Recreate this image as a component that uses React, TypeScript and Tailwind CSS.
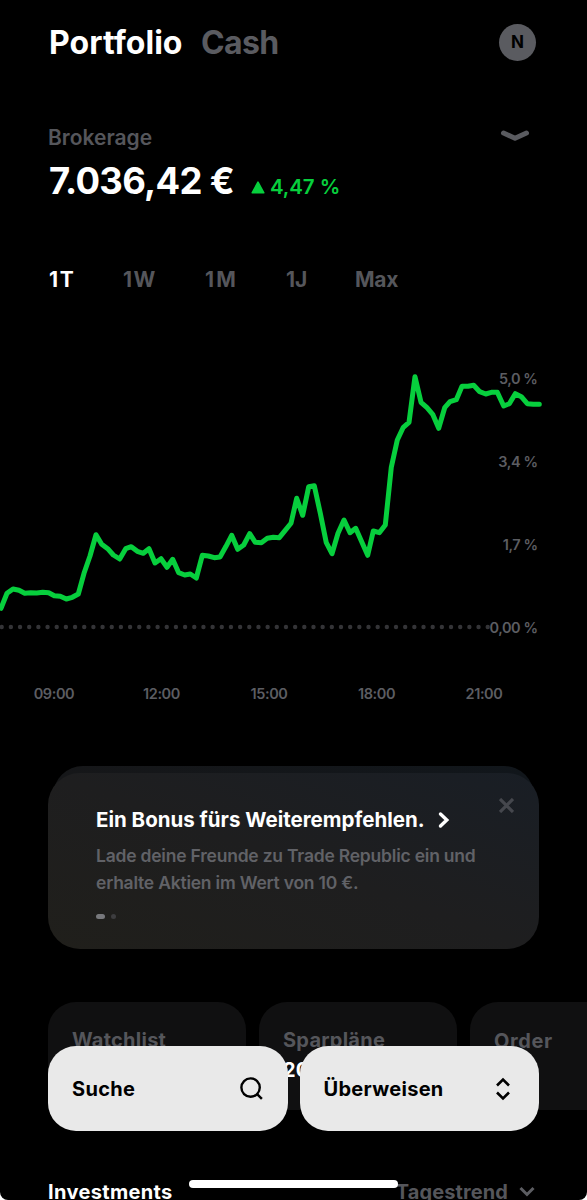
import React from "react";

const LINE: [number, number][] = [
  [3, 745], [21, 700], [39, 687], [57, 691], [74, 700], [92, 698], [110, 699], [128, 697], [146, 698], [163, 707],
  [181, 709], [199, 717], [217, 712], [235, 702], [252, 640], [270, 588], [288, 524], [305, 553], [323, 566],
  [340, 585], [359, 597], [377, 566], [394, 560], [412, 574], [430, 580], [447, 566], [465, 609], [483, 596],
  [501, 622], [518, 598], [536, 638], [554, 645], [571, 642], [589, 654], [607, 586], [625, 588], [643, 593],
  [660, 591], [678, 559], [695, 526], [713, 568], [731, 555], [749, 521], [766, 547], [784, 548], [802, 535],
  [820, 532], [838, 533], [855, 512], [873, 490], [890, 415], [908, 466], [926, 380], [943, 377], [961, 460],
  [979, 548], [996, 581], [1014, 520], [1032, 480], [1050, 518], [1067, 505], [1085, 545], [1103, 586],
  [1120, 513], [1138, 518], [1156, 495], [1174, 322], [1192, 240], [1210, 202], [1227, 187], [1245, 50],
  [1263, 127], [1281, 143], [1298, 163], [1316, 205], [1334, 143], [1350, 125], [1369, 119], [1386, 79],
  [1404, 79], [1421, 76], [1439, 95], [1457, 102], [1474, 97], [1492, 97], [1511, 138], [1528, 131], [1546, 101],
  [1564, 110], [1582, 131], [1600, 133], [1618, 133],
];

const points = LINE.map(([x, y]) => `${(x / 3).toFixed(1)},${(y / 3).toFixed(1)}`).join(" ");

function Header() {
  return (
    <header className="flex h-[84px] items-center justify-between pr-[51px] pl-[49px]">
      <div className="flex gap-[19px] pt-[2px] text-[32px] font-bold leading-[40px]">
        <h1 className="w-[133px] tracking-[0.05px]">Portfolio</h1>
        <span className="tracking-[-0.6px] text-[#5a5b60]">Cash</span>
      </div>
      <div className="flex size-[37px] items-center justify-center rounded-full bg-[#5a5b60] pt-[2px] text-[17px] font-bold text-black">
        N
      </div>
    </header>
  );
}

function Balance() {
  return (
    <section className="flex h-[166px] justify-between pt-[37px] pr-[57px] pl-[48px]">
      <div>
        <p className="h-[32px] text-[21px] font-semibold leading-[34px] tracking-[0px] text-[#55565b]">Brokerage</p>
        <div className="flex items-baseline">
          <span className="w-[203px] pl-[1px] text-[36.5px] font-bold leading-[56px] tracking-[-0.7px]">7.036,42 €</span>
          <svg className="mr-[5px] h-[13px] w-[14px]" viewBox="0 0 14 13">
            <path d="M7 1.2 12.8 11.8H1.2Z" fill="#07cf3d" stroke="#07cf3d" strokeWidth="1.6" strokeLinejoin="round" />
          </svg>
          <span className="text-[20.5px] font-semibold tracking-[-0.1px] text-[#07cf3d]">4,47 %</span>
        </div>
      </div>
      <svg className="mt-[8px] h-[13px] w-[30px]" viewBox="0 0 30 13" fill="none">
        <path d="M3.5 4 15 9.2 26.500 4" stroke="#5a5b60" strokeWidth="5" strokeLinecap="round" strokeLinejoin="round" />
      </svg>
    </section>
  );
}

function Ranges() {
  return (
    <nav className="flex h-[60px] items-center pl-[49px] text-[21px] font-bold text-[#55565b]">
      <span className="w-[74px] tracking-[1.8px] text-white">1T</span>
      <span className="w-[82px] tracking-[1.5px]">1W</span>
      <span className="w-[81px] tracking-[2.2px]">1M</span>
      <span className="w-[69px]">1J</span>
      <span className="tracking-[-0.3px]">Max</span>
    </nav>
  );
}

function Chart() {
  return (
    <section className="mt-[50px] h-[368px]">
      <div className="grid h-[300px]">
        <div className="col-start-1 row-start-1 flex flex-col items-end gap-[59px] pt-[7px] pr-[49.5px] text-[14.5px] font-semibold leading-[24px] tracking-[-0.45px] text-[#5c5d62]">
          <span>5,0 %</span>
          <span>3,4 %</span>
          <span>1,7 %</span>
          <span>0,00 %</span>
        </div>
        <svg className="col-start-1 row-start-1 h-[300px] w-[587px]" viewBox="0 0 587 300" fill="none">
          <path d="M1.700 267H488" stroke="#343437" strokeWidth="4.400" strokeLinecap="round" strokeDasharray="0 9.170" />
          <polyline points={points} stroke="#07cf3d" strokeWidth="5" strokeLinecap="round" strokeLinejoin="round" />
        </svg>
      </div>
      <div className="flex gap-[66.500px] pt-[21px] pl-[33.5px] text-[14.5px] font-semibold leading-[25px] tracking-[-0.4px] text-[#5c5d62]">
        {["09:00", "12:00", "15:00", "18:00", "21:00"].map((t) => (
          <span key={t} className="flex w-[41px] justify-center whitespace-nowrap">{t}</span>
        ))}
      </div>
    </section>
  );
}

function Promo() {
  return (
    <section className="mx-[48px] mt-[38px] h-[183px] w-[491px]">
      <div className="mx-[5px] h-[40px] rounded-t-[30px] bg-linear-to-r from-[#161719] to-[#11161b]" />
      <div className="-mt-[33px] flex h-[176px] justify-between rounded-[32px] bg-linear-to-tr from-[#201f1b] via-[#1e1e1f] to-[#191e25] pt-[32px] pr-[25px] pl-[48px]">
        <div>
          <div className="flex h-[30px] items-center">
            <h2 className="w-[342px] whitespace-nowrap text-[20.500px] font-bold tracking-[0px]">Ein Bonus fürs Weiterempfehlen.</h2>
            <svg className="h-[18px] w-[12px]" viewBox="0 0 12 18" fill="none">
              <path d="M2.500 3 8.800 9 2.500 15" stroke="white" strokeWidth="3.400" strokeLinecap="round" />
            </svg>
          </div>
          <p className="mt-[7px] whitespace-nowrap text-[17.5px] font-semibold leading-[27px] tracking-[-0.22px] text-[#616267]">
            Lade deine Freunde zu Trade Republic ein und
            <br />
            erhalte Aktien im Wert von 10 €.
          </p>
          <div className="mt-[18px] flex items-center gap-[6px]">
            <span className="h-[5px] w-[9px] rounded-full bg-[#77787c]" />
            <span className="size-[5px] rounded-full bg-[#3d3d3f]" />
          </div>
        </div>
        <svg className="-mt-[7px] size-[15px]" viewBox="0 0 15 15" fill="none">
          <path d="M1 1 14 14M14 1 1 14" stroke="#45474d" strokeWidth="3.200" />
        </svg>
      </div>
    </section>
  );
}

function Shortcuts() {
  return (
    <section className="mt-[53px] flex h-[108px] gap-[13px] pl-[48px] text-[20px] font-bold leading-[28px] tracking-[0.25px] text-[#55565b]">
      <div className="w-[198px] shrink-0 rounded-t-[28px] bg-[#101011] pt-[24px] pl-[24px]">Watchlist</div>
      <div className="w-[198px] shrink-0 rounded-t-[28px] bg-[#101011] pt-[24px] pl-[24px]">
        <p>Sparpläne</p>
        <p className="mt-[2px] text-white">20</p>
      </div>
      <div className="w-[198px] shrink-0 rounded-tl-[28px] bg-[#101011] pt-[25px] pl-[24px] tracking-[0.6px]">Order</div>
    </section>
  );
}

function Investments() {
  return (
    <section className="mt-[66px] flex h-[32px] items-center justify-between pr-[52px] pl-[48px] text-[20px] font-bold">
      <h2 className="tracking-[0.35px]">Investments</h2>
      <div className="flex items-center gap-[11px] tracking-[0.1px] text-[#55565b]">
        Tagestrend
        <svg className="h-[12px] w-[16px]" viewBox="0 0 16 12" fill="none">
          <path d="M1.500 2 8 8.500 14.500 2" stroke="#5c5d62" strokeWidth="3" />
        </svg>
      </div>
    </section>
  );
}

function Actions() {
  return (
    <div className="absolute inset-x-[48px] top-[1046px] flex gap-[12px] text-[20px] font-bold tracking-[0.3px] text-black">
      <button className="flex h-[85px] w-[239.5px] items-center justify-between rounded-[28px] bg-[#e9e9e9] pr-[24.5px] pl-[24px]">
        Suche
        <svg className="size-[23px]" viewBox="0 0 25 25" fill="none" stroke="black" strokeWidth="2.600">
          <circle cx="11.500" cy="11.500" r="10" />
          <path d="M18 18 23.800 23.800" />
        </svg>
      </button>
      <button className="flex h-[85px] w-[239.5px] items-center justify-between rounded-[28px] bg-[#e9e9e9] pr-[29px] pl-[24px]">
        Überweisen
        <svg className="h-[24px] w-[14px]" viewBox="0 0 14 24" fill="none" stroke="black" strokeWidth="2.600">
          <path d="M1 8.500 7 2.500 13 8.500M1 15.500 7 21.500 13 15.500" />
        </svg>
      </button>
    </div>
  );
}

export default function App() {
  return (
    <div className="h-[1200px] w-[587px] overflow-hidden bg-white">
      <main className="relative h-[1200px] overflow-hidden rounded-b-[8px] bg-black font-['Inter',sans-serif] text-white">
        <Header />
        <Balance />
        <Ranges />
        <Chart />
        <Promo />
        <Shortcuts />
        <Investments />
        <Actions />
        <div className="absolute top-[1180px] left-[189px] h-[8px] w-[209px] rounded-full bg-white" />
      </main>
    </div>
  );
}
